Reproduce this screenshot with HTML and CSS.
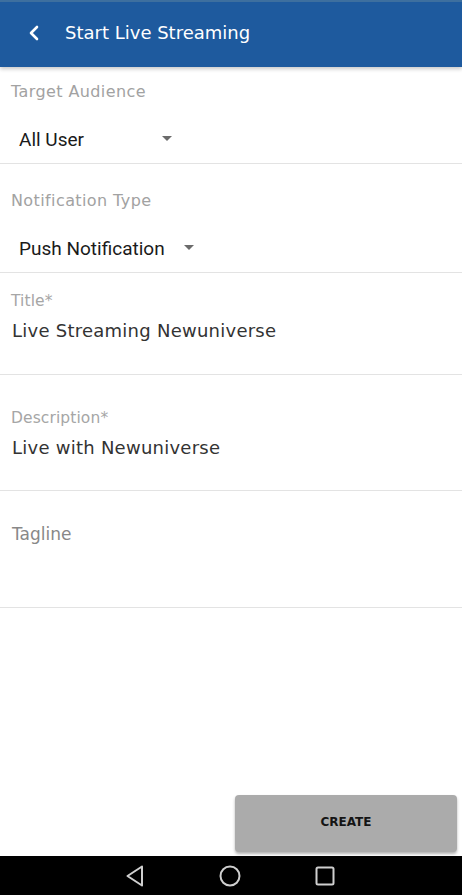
FILE: index.html
```html
<!DOCTYPE html>
<html lang="en">
<head>
<meta charset="utf-8">
<title>Start Live Streaming</title>
<link rel="stylesheet" href="styles.css">
</head>
<body>
<div class="screen">
  <header class="appbar">
    <svg class="back" width="14" height="16" viewBox="0 0 14 16" aria-hidden="true">
      <path d="M10 2 L4 8 L10 14" fill="none" stroke="#ffffff" stroke-width="2.6" stroke-linecap="round" stroke-linejoin="round"/>
    </svg>
    <h1 class="appbar-title">Start Live Streaming</h1>
  </header>

  <main class="form">
    <section class="field spinner-field first">
      <div class="label">Target Audience</div>
      <div class="spinner">
        <span class="spinner-value audience">All User</span>
        <span class="caret"></span>
      </div>
    </section>

    <section class="field spinner-field second">
      <div class="label">Notification Type</div>
      <div class="spinner">
        <span class="spinner-value">Push Notification</span>
        <span class="caret"></span>
      </div>
    </section>

    <section class="field text-field title-field">
      <div class="small-label">Title*</div>
      <div class="value">Live Streaming Newuniverse</div>
    </section>

    <section class="field text-field desc-field">
      <div class="small-label">Description*</div>
      <div class="value">Live with Newuniverse</div>
    </section>

    <section class="field text-field tagline-field">
      <div class="hint">Tagline</div>
    </section>
  </main>

  <div class="actions">
    <button class="create-btn" type="button">CREATE</button>
  </div>

  <nav class="navbar">
    <svg width="20" height="22" viewBox="0 0 20 22" aria-hidden="true">
      <path d="M17 1.5 L2.5 11 L17 20.5 Z" fill="none" stroke="#cfcfcf" stroke-width="2" stroke-linejoin="round"/>
    </svg>
    <svg width="22" height="22" viewBox="0 0 22 22" aria-hidden="true">
      <circle cx="11" cy="11" r="9.5" fill="none" stroke="#cfcfcf" stroke-width="2"/>
    </svg>
    <svg width="20" height="20" viewBox="0 0 20 20" aria-hidden="true">
      <rect x="1.5" y="1.5" width="17" height="17" rx="1.5" fill="none" stroke="#cfcfcf" stroke-width="2"/>
    </svg>
  </nav>
</div>
</body>
</html>
```

FILE: styles.css
```css
* { box-sizing: border-box; }

html, body {
  margin: 0;
  padding: 0;
  background: #ffffff;
}

body {
  font-family: "DejaVu Sans", "Open Sans", sans-serif;
}

.screen {
  width: 462px;
  height: 895px;
  display: flex;
  flex-direction: column;
  overflow: hidden;
}

.appbar {
  position: relative;
  z-index: 2;
  height: 67px;
  flex: 0 0 67px;
  background: #1e5a9e;
  border-top: 2px solid #3d6f9f;
  display: flex;
  align-items: center;
  padding-left: 27px;
  padding-bottom: 5px;
  box-shadow: 0 2px 4px rgba(0, 0, 0, 0.22);
}

.back {
  display: block;
  margin-top: 1px;
}

.appbar-title {
  margin: 0 0 0 24px;
  font-size: 18px;
  font-weight: 400;
  color: #ffffff;
}

.form {
  flex: 1;
  display: flex;
  flex-direction: column;
}

.field {
  border-bottom: 1px solid #e3e3e3;
  padding-left: 11px;
  padding-right: 11px;
}

.label {
  font-size: 16px;
  line-height: 22px;
  color: #a2a2a2;
  letter-spacing: 0.4px;
}

.spinner-field.first { padding-top: 14px; }
.spinner-field.second { padding-top: 26px; }

.spinner {
  height: 48px;
  margin-top: 12px;
  padding-left: 8px;
  display: flex;
  align-items: center;
  gap: 19px;
}

.spinner-value {
  font-family: Roboto, "Noto Sans", sans-serif;
  font-size: 19px;
  color: #1a1a1a;
}

.spinner-value.audience { min-width: 124px; }

.caret {
  width: 0;
  height: 0;
  border-left: 5px solid transparent;
  border-right: 5px solid transparent;
  border-top: 5px solid #6b6b6b;
  margin-top: -2px;
}

.small-label {
  font-size: 15.5px;
  line-height: 20px;
  color: #a6a6a6;
  letter-spacing: 0.1px;
}

.value {
  margin-top: 8px;
  font-size: 18px;
  line-height: 24px;
  color: #333333;
  padding-left: 1px;
  letter-spacing: 0.25px;
}

.title-field { padding-top: 18px; padding-bottom: 31px; }
.desc-field { padding-top: 33px; padding-bottom: 30px; }

.tagline-field {
  height: 117px;
  padding-top: 32px;
}

.hint {
  font-size: 17px;
  line-height: 22px;
  color: #888888;
  padding-left: 1px;
}

.actions {
  display: flex;
  justify-content: flex-end;
  padding: 0 5px 4px 0;
}

.create-btn {
  width: 222px;
  height: 57px;
  border: none;
  border-radius: 4px;
  background: #ababab;
  box-shadow: 0 2px 3px rgba(0, 0, 0, 0.3);
  font-family: "DejaVu Sans", "Open Sans", sans-serif;
  font-size: 12px;
  font-weight: 700;
  color: #141414;
  padding-bottom: 4px;
}

.navbar {
  height: 39px;
  flex: 0 0 39px;
  background: #000000;
  display: flex;
  align-items: center;
  justify-content: center;
  gap: 74px;
  padding-right: 3px;
}

.navbar svg { display: block; }
```
